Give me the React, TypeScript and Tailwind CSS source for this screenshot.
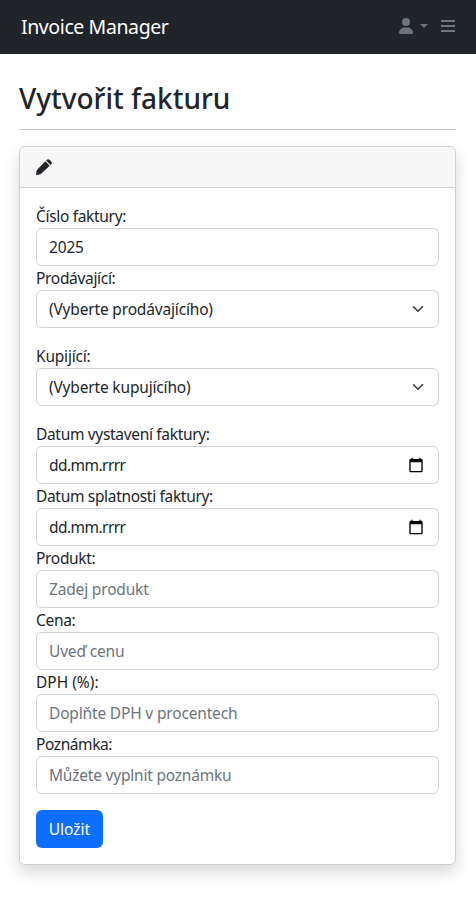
import React from "react";

type FieldProps = {
  label: string;
  labelClass?: string;
  textClass?: string;
  value?: string;
  placeholder?: string;
  icon?: React.ReactNode;
  spaced?: boolean;
};

function Field({ label, labelClass = "tracking-[-0.32px]", textClass = "tracking-[-0.17px]", value, placeholder, icon, spaced }: FieldProps) {
  return (
    <div className={spaced ? "mb-4" : ""}>
      <label className={`block h-6 whitespace-nowrap leading-6 ${labelClass}`}>{label}</label>
      <div className="flex h-[38px] items-center rounded-md border border-[#ced4da] bg-white px-3">
        <input
          type="text"
          readOnly
          defaultValue={value}
          placeholder={placeholder}
          className={`h-6 min-w-0 flex-1 bg-transparent leading-6 outline-none placeholder:text-[#6c757d] ${textClass}`}
        />
        {icon}
      </div>
    </div>
  );
}

function Chevron() {
  return (
    <svg className="h-3 w-4 shrink-0" viewBox="0 0 16 16" fill="none" stroke="#343a40" strokeWidth="2" strokeLinecap="round" strokeLinejoin="round">
      <path d="m2 5 6 6 6-6" />
    </svg>
  );
}

function Calendar() {
  return (
    <svg className="mr-0.5 h-4 w-4 shrink-0" viewBox="0 0 24 24" fill="#000">
      <path d="M20 3h-1V1h-2v2H7V1H5v2H4c-1.100 0-2 .9-2 2v16c0 1.100.9 2 2 2h16c1.100 0 2-.9 2-2V5c0-1.100-.9-2-2-2zm0 18H4V8h16v13z" />
    </svg>
  );
}

export default function App() {
  return (
    <div className="min-h-[908px] bg-white font-['Noto_Sans',sans-serif] text-[15.5px] text-[#212529]">
      <nav className="flex h-[54px] items-center bg-[#212529] pl-[21px] pr-5">
        <span className="flex-1 text-[19.5px] leading-[30px] tracking-[-0.4px] text-white">Invoice Manager</span>
        <svg className="mt-[-2px] h-4 w-3.5" viewBox="0 0 448 512" fill="#6c757d">
          <path d="M224 256A128 128 0 1 0 224 0a128 128 0 1 0 0 256zm-45.700 48C79.800 304 0 383.800 0 482.300 0 498.700 13.300 512 29.700 512h388.600c16.400 0 29.700-13.300 29.700-29.700C448 383.800 368.200 304 269.700 304z" />
        </svg>
        <span className="ml-[7px] mt-[-2px] h-0 w-0 border-x-4 border-t-4 border-x-transparent border-t-[#6c757d]" />
        <svg className="ml-3 h-4 w-4" viewBox="0 0 16 16" fill="#6c757d">
          <path d="M1 1h14v2H1zM1 6h14v2H1zM1 11h14v2H1z" />
        </svg>
      </nav>
      <main className="pl-[19px] pr-5 pt-6">
        <h1 className="h-[34px] text-[28px] font-medium leading-[40px]">Vytvořit fakturu</h1>
        <hr className="mt-[17px] border-t border-[#c8c9ca]" />
        <section className="mt-4 rounded-md border border-[#cfd0d1] bg-white shadow-[0_8px_16px_rgba(0,0,0,0.15)]">
          <header className="flex h-[41px] items-center rounded-t-[5px] border-b border-[#cfd0d1] bg-[#f7f7f7] px-4">
            <svg className="h-4 w-4" viewBox="0 0 16 16" fill="#212529">
              <path d="M0 16 .5 12.300Q.7 11.300 1.400 10.600L9.300 2.300 13.700 6.700 5.400 14.600Q4.700 15.300 3.700 15.500Z" />
              <path d="m10.100 1.500.8-.8Q12.100-.4 13.400.8L15.200 2.600Q16.500 3.900 15.300 5.100L14.500 5.900Z" />
            </svg>
          </header>
          <form className="p-4">
            <Field label="Číslo faktury:" value="2025" />
            <Field label="Prodávající:" value="(Vyberte prodávajícího)" icon={<Chevron />} spaced />
            <Field label="Kupijící:" labelClass="tracking-[-0.2px]" value="(Vyberte kupujícího)" icon={<Chevron />} spaced />
            <Field label="Datum vystavení faktury:" value="dd.mm.rrrr" textClass="tracking-[-0.55px]" icon={<Calendar />} />
            <Field label="Datum splatnosti faktury:" value="dd.mm.rrrr" textClass="tracking-[-0.55px]" icon={<Calendar />} />
            <Field label="Produkt:" placeholder="Zadej produkt" />
            <Field label="Cena:" placeholder="Uveď cenu" />
            <Field label="DPH (%):" labelClass="tracking-normal" placeholder="Doplňte DPH v procentech" />
            <Field label="Poznámka:" labelClass="tracking-[-0.42px]" placeholder="Můžete vyplnit poznámku" textClass="tracking-[-0.21px]" />
            <button type="button" className="mt-4 block h-[38px] w-[67px] rounded-md bg-[#0d6efd] text-center leading-6 text-white">
              Uložit
            </button>
          </form>
        </section>
      </main>
    </div>
  );
}
